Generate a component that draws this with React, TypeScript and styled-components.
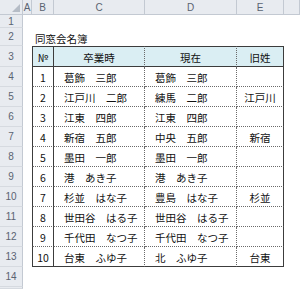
import React from "react";
import styled, { createGlobalStyle, css } from "styled-components";

const Global = createGlobalStyle`
  html, body { margin: 0; padding: 0; background: #ffffff; overflow: hidden; }
  #root { width: 300px; height: 289px; }
`;

const SOLID = "#3c3c3c";
const DASH = "#6a6a6a";
const HDR_BG = "#e8ebf0";
const HDR_LINE = "#c3c9d2";

const Sheet = styled.div`
  display: grid;
  grid-template-columns: 23px 9px 22px 91px 92px 47px 1fr;
  grid-template-rows: 15px 13px 18px 21px repeat(10, 20px) 20px 1fr;
  width: 300px;
  height: 289px;
  font-family: "Noto Sans CJK JP", "Noto Sans", sans-serif;
  font-size: 10.5px;
  color: #111;
  background: #fff;
`;

const Corner = styled.div`
  background: ${HDR_BG};
  border-right: 1px solid ${HDR_LINE};
  border-bottom: 1px solid ${HDR_LINE};
  box-sizing: border-box;
  display: flex;
  align-items: flex-end;
  justify-content: flex-end;
  padding: 0 2px 2px 0;
`;

const ColHead = styled.div`
  background: ${HDR_BG};
  border-right: 1px solid ${HDR_LINE};
  border-bottom: 1px solid ${HDR_LINE};
  box-sizing: border-box;
  display: flex;
  align-items: center;
  justify-content: center;
  font-family: "Liberation Sans", "Noto Sans", sans-serif;
  font-size: 10px;
  color: #5a6372;
`;

const RowHead = styled.div`
  background: ${HDR_BG};
  border-right: 1px solid ${HDR_LINE};
  border-bottom: 1px solid #d6dae0;
  box-sizing: border-box;
  display: flex;
  align-items: center;
  justify-content: center;
  font-family: "Liberation Sans", "Noto Sans", sans-serif;
  font-size: 10px;
  color: #5a6372;
`;

const Blank = styled.div<{ $span?: number }>`
  ${(p) => p.$span && css`grid-column: span ${p.$span};`}
`;

const Title = styled.div`
  grid-column: span 4;
  display: flex;
  align-items: center;
  padding-left: 3px;
  padding-top: 2px;
  white-space: nowrap;
`;

type Line = "solid" | "dotted" | "none";

const lineColor = (l: Line) => (l === "solid" ? SOLID : DASH);

const Cell = styled.div<{
  $left?: Line;
  $right?: Line;
  $top?: Line;
  $bottom?: Line;
  $head?: boolean;
  $align?: "center" | "left";
}>`
  box-sizing: border-box;
  display: flex;
  align-items: center;
  padding-top: 2px;
  white-space: nowrap;
  overflow: hidden;
  justify-content: ${(p) => (p.$align === "left" ? "flex-start" : "center")};
  padding-left: ${(p) => (p.$align === "left" ? "10px" : "0")};
  background: ${(p) => (p.$head ? "#daeef3" : "#fff")};
  ${(p) => p.$left && p.$left !== "none" && css`border-left: 1px ${p.$left} ${lineColor(p.$left)};`}
  ${(p) => p.$right && p.$right !== "none" && css`border-right: 1px ${p.$right} ${lineColor(p.$right)};`}
  ${(p) => p.$top && p.$top !== "none" && css`border-top: 1px ${p.$top} ${lineColor(p.$top)};`}
  ${(p) => p.$bottom && p.$bottom !== "none" && css`border-bottom: 1px ${p.$bottom} ${lineColor(p.$bottom)};`}
`;

const rows: [string, string, string, string][] = [
  ["1", "葛飾　三郎", "葛飾　三郎", ""],
  ["2", "江戸川　二郎", "練馬　二郎", "江戸川"],
  ["3", "江東　四郎", "江東　四郎", ""],
  ["4", "新宿　五郎", "中央　五郎", "新宿"],
  ["5", "墨田　一郎", "墨田　一郎", ""],
  ["6", "港　あき子", "港　あき子", ""],
  ["7", "杉並　はな子", "豊島　はな子", "杉並"],
  ["8", "世田谷　はる子", "世田谷　はる子", ""],
  ["9", "千代田　なつ子", "千代田　なつ子", ""],
  ["10", "台東　ふゆ子", "北　ふゆ子", "台東"],
];

export default function App() {
  return (
    <>
      <Global />
      <Sheet>
        <Corner>
          <svg width="8" height="8" viewBox="0 0 8 8">
            <polygon points="8,0 8,8 0,8" fill="#b5bcc6" />
          </svg>
        </Corner>
        {["A", "B", "C", "D", "E", ""].map((c, i) => (
          <ColHead key={i}>{c}</ColHead>
        ))}

        <RowHead>1</RowHead>
        <Blank $span={6} />

        <RowHead>2</RowHead>
        <Blank />
        <Title>同窓会名簿</Title>
        <Blank />

        <RowHead>3</RowHead>
        <Blank />
        <Cell $head $left="solid" $right="solid" $top="solid" $bottom="solid">№</Cell>
        <Cell $head $right="dotted" $top="solid" $bottom="solid">卒業時</Cell>
        <Cell $head $right="dotted" $top="solid" $bottom="solid">現在</Cell>
        <Cell $head $right="solid" $top="solid" $bottom="solid">旧姓</Cell>
        <Blank />

        {rows.map((r, i) => {
          const bottom: Line = i === rows.length - 1 ? "solid" : "dotted";
          return (
            <React.Fragment key={r[0]}>
              <RowHead>{i + 4}</RowHead>
              <Blank />
              <Cell $left="solid" $right="solid" $bottom={bottom}>{r[0]}</Cell>
              <Cell $align="left" $right="dotted" $bottom={bottom}>{r[1]}</Cell>
              <Cell $align="left" $right="dotted" $bottom={bottom}>{r[2]}</Cell>
              <Cell $right="solid" $bottom={bottom}>{r[3]}</Cell>
              <Blank />
            </React.Fragment>
          );
        })}

        <RowHead>14</RowHead>
        <Blank $span={6} />

        <RowHead />
        <Blank $span={6} />
      </Sheet>
    </>
  );
}
